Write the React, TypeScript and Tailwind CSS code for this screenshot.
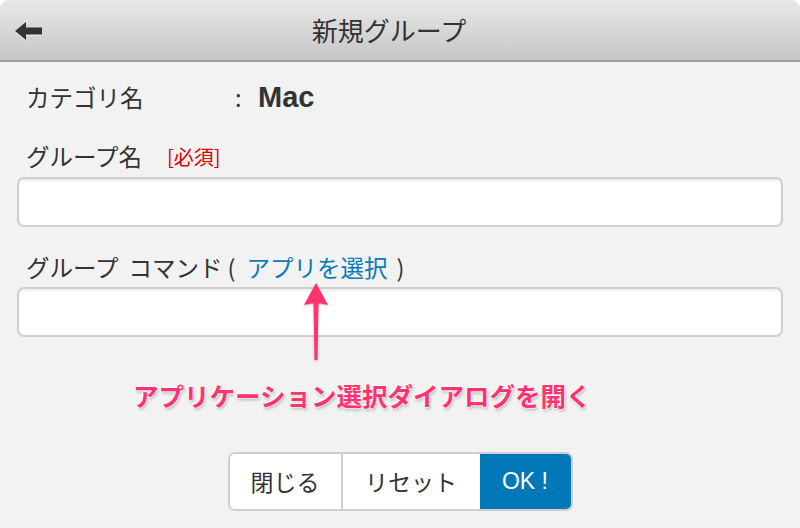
import React from "react";

const jp = { fontFamily: '"Noto Sans CJK JP", "Noto Sans", sans-serif' };

function BackArrow() {
  return (
    <svg width="28" height="20" viewBox="0 0 28 20" className="drop-shadow-[0_1px_0_rgba(255,255,255,0.6)]">
      <path d="M0 10 L11 1 L11 6.5 L27 6.5 L27 13.5 L11 13.5 L11 19 Z" fill="#333" />
    </svg>
  );
}

function PointerArrow() {
  return (
    <svg
      width="30"
      height="82"
      viewBox="0 0 30 82"
      className="absolute left-[301px] top-[281px] drop-shadow-[0_1px_1px_rgba(0,0,0,0.25)]"
    >
      <path
        d="M15 2 L27 24 Q21 22 17.5 22.5 L16.5 79 L13.5 79 L12.5 22.5 Q9 22 3 24 Z"
        fill="#ff3370"
      />
    </svg>
  );
}

export default function App() {
  return (
    <div className="w-[800px] h-[528px] bg-white relative overflow-hidden" style={jp}>
      <div className="h-full bg-[#f2f2f2] rounded-t-[9px] overflow-hidden flex flex-col">
        <header className="h-[62px] shrink-0 flex items-center relative bg-gradient-to-b from-[#e9e9e9] to-[#c6c6c6] border-b-2 border-[#9b9b9b]">
          <button className="absolute left-[15px] top-[21px]">
            <BackArrow />
          </button>
          <h1 className="w-full pr-[22px] text-center text-[26px] text-[#333] leading-none">新規グループ</h1>
        </header>

        <main className="px-[17px] pt-[21px] flex flex-col">
          <div className="flex items-center h-[30px] pl-[9px] text-[23.5px] text-[#333]">
            <span className="w-[209px]">カテゴリ名</span>
            <span className="w-[23px]">:</span>
            <span className="font-bold text-[29px] text-[#333]" style={{ fontFamily: '"Liberation Sans", Arial, sans-serif' }}>
              Mac
            </span>
          </div>

          <div className="flex items-center h-[30px] pl-[9px] mt-[29px] text-[23.5px] text-[#333]">
            <span>グループ名</span>
            <span className="ml-[25px] text-[20px] text-[#d40000]">[必須]</span>
          </div>
          <input
            className="mt-[5px] h-[50px] w-full rounded-[7px] border-2 border-[#cfcfcf] bg-white shadow-[inset_0_2px_3px_rgba(0,0,0,0.08)] outline-none"
          />

          <div className="flex items-center h-[30px] pl-[9px] mt-[26px] text-[23.5px] text-[#333]">
            <span>グループ</span>
            <span className="ml-[10px]">コマンド</span>
            <span className="ml-[5px]">(</span>
            <span className="ml-[11px] text-[#0b7ab8]">アプリを選択</span>
            <span className="ml-[9px]">)</span>
          </div>
          <input
            className="mt-[4px] h-[50px] w-full rounded-[7px] border-2 border-[#cfcfcf] bg-white shadow-[inset_0_2px_3px_rgba(0,0,0,0.08)] outline-none"
          />

          <p
            className="mt-[43px] h-[30px] leading-[30px] pl-[116px] text-[25.5px] font-bold text-[#ff3370]"
            style={{
              textShadow:
                "0 0 2px #fff, 0 0 2px #fff, 0 0 3px #fff, 1px 2px 3px rgba(0,0,0,0.3)",
            }}
          >
            アプリケーション選択ダイアログを開く
          </p>

          <div className="mt-[42px] flex justify-center">
            <div className="flex h-[59px] rounded-[7px] border-2 border-[#cfcfcf] overflow-hidden text-[23px]">
              <button className="w-[113px] bg-white text-[#333] border-r-2 border-[#cfcfcf]">閉じる</button>
              <button className="w-[137px] bg-white text-[#333]">リセット</button>
              <button
                className="w-[91px] bg-[#0077b7] text-white text-[23px]"
                style={{ fontFamily: '"Liberation Sans", Arial, sans-serif' }}
              >
                OK !
              </button>
            </div>
          </div>
        </main>
      </div>
      <PointerArrow />
    </div>
  );
}
